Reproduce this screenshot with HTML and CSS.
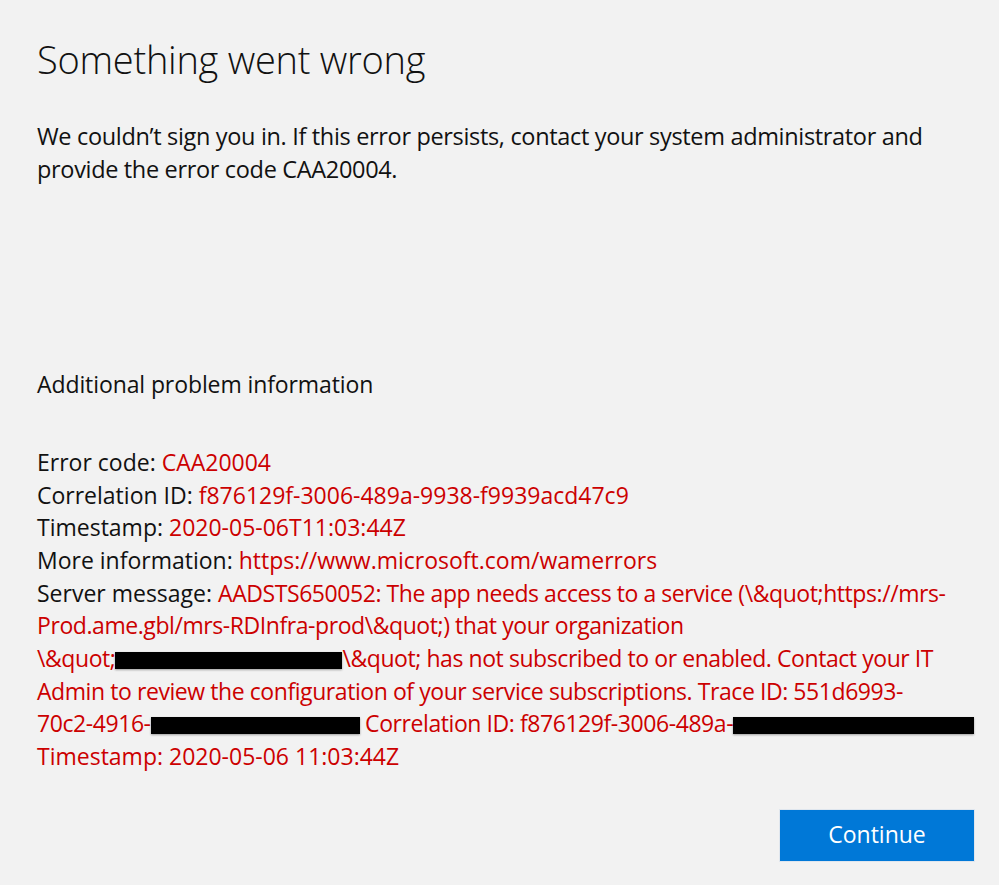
FILE: index.html
```html
<!DOCTYPE html>
<html lang="en">
<head>
<meta charset="utf-8">
<title>Something went wrong</title>
<link rel="stylesheet" href="styles.css">
</head>
<body>
<main class="page">
  <h1 class="title">Something went wrong</h1>
  <p class="lead">We couldn’t sign you in. If this error persists, contact your system administrator and<br>provide the error code CAA20004.</p>
  <h2 class="section">Additional problem information</h2>
  <div class="details">
    <div class="row">Error code: <span class="val">CAA20004</span></div>
    <div class="row">Correlation ID: <span class="val">f876129f-3006-489a-9938-f9939acd47c9</span></div>
    <div class="row">Timestamp: <span class="val">2020-05-06T11:03:44Z</span></div>
    <div class="row">More information: <span class="val">https://www.microsoft.com/wamerrors</span></div>
    <div class="row server">Server message: <span class="val">AADSTS650052: The app needs access to a service (\&amp;quot;https://mrs-<br>Prod.ame.gbl/mrs-RDInfra-prod\&amp;quot;) that your organization<br>\&amp;quot;<span class="redact r1"></span>\&amp;quot; has not subscribed to or enabled. Contact your IT<br>Admin to review the configuration of your service subscriptions. Trace ID: 551d6993-<br>70c2-4916-<span class="redact r2"></span> Correlation ID: f876129f-3006-489a-<span class="redact r3"></span><br><span class="ts">Timestamp: 2020-05-06 11:03:44Z</span></span></div>
  </div>
  <div class="actions">
    <button class="btn" type="button">Continue</button>
  </div>
</main>
</body>
</html>
```
FILE: styles.css
```css
html, body {
  margin: 0;
  padding: 0;
  background: #f2f2f2;
}
body {
  font-family: "Open Sans", "Noto Sans", "Liberation Sans", sans-serif;
  color: #111;
}
.page {
  width: 999px;
  height: 885px;
  box-sizing: border-box;
  padding: 36px 24px 0 37px;
  display: flex;
  flex-direction: column;
}
.title {
  margin: 0;
  font-weight: 300;
  font-size: 38px;
  line-height: 46px;
  letter-spacing: -0.25px;
}
.lead {
  margin: 38px 0 0;
  font-size: 23.5px;
  line-height: 33px;
  letter-spacing: -0.33px;
  white-space: nowrap;
}
.section {
  margin: 182px 0 0;
  font-weight: 400;
  font-size: 23px;
  line-height: 33px;
  letter-spacing: -0.1px;
}
.details {
  margin-top: 45px;
  font-size: 23px;
  line-height: 32.67px;
}
.row { white-space: nowrap; }
.val { color: #cc0000; }
.server .val { letter-spacing: -0.43px; }
.server .ts { letter-spacing: 0; }
.redact {
  display: inline-block;
  height: 17px;
  background: #000;
  vertical-align: -2px;
  box-shadow: 0 1px 2px rgba(0,0,0,0.35);
}
.r1 { width: 227px; }
.r2 { width: 209px; }
.r3 { width: 241px; }
.actions {
  display: flex;
  justify-content: flex-end;
  margin-top: 36px;
}
.btn {
  width: 196px;
  height: 53px;
  background: #0078d7;
  border: 1px solid #dfe6ee;
  color: #fff;
  font-family: inherit;
  font-size: 23px;
  padding: 0 0 3px;
}
```
